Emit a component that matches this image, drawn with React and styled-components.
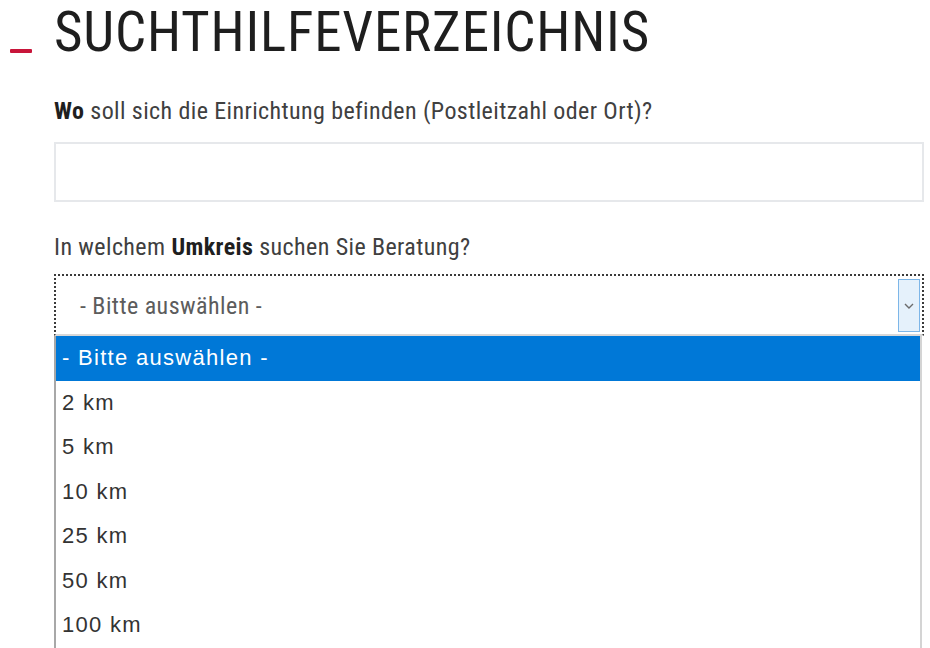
import { useState } from 'react';
import styled, { createGlobalStyle } from 'styled-components';

const GlobalStyle = createGlobalStyle`
    html, body {
        margin: 0;
        padding: 0;
        background: #ffffff;
    }
    body {
        width: 930px;
        height: 648px;
        overflow: hidden;
        font-family: 'Roboto Condensed', 'Liberation Sans Narrow', 'DejaVu Sans Condensed', Roboto, sans-serif;
    }
`;

const Page = styled.main`
    display: flex;
    flex-direction: column;
    padding: 0 6px 0 54px;
`;

const TitleRow = styled.div`
    display: flex;
    align-items: flex-end;
    height: 64px;
    margin-left: -44px;
    gap: 22px;
`;

const Dash = styled.span`
    display: block;
    width: 22px;
    height: 4px;
    margin-bottom: 11px;
    border-radius: 1px;
    background-color: #c8153a;
`;

const Title = styled.h1`
    margin: 0;
    font-family: 'Roboto Condensed', 'Liberation Sans Narrow', 'DejaVu Sans Condensed', Roboto, sans-serif;
    font-size: 55px;
    font-weight: 400;
    letter-spacing: 0.8px;
    line-height: 64px;
    color: #1e1e1e;
    white-space: nowrap;
`;

const Label = styled.label`
    display: block;
    margin: ${({ $top }) => $top}px 0 0;
    font-size: 24px;
    letter-spacing: 0.4px;
    line-height: 30px;
    color: #404040;

    b {
        color: #1f1f1f;
        font-weight: 700;
    }
`;

const TextInput = styled.input`
    display: block;
    box-sizing: border-box;
    width: 870px;
    height: 60px;
    margin-top: 16px;
    border: 2px solid #e6e8eb;
    outline: none;
    background: #ffffff;
`;

const SelectWrap = styled.div`
    position: relative;
    margin-top: 12px;
    width: 870px;
`;

const SelectBox = styled.div`
    display: flex;
    align-items: center;
    box-sizing: border-box;
    height: 62px;
    padding: 3px 2px 2px 24px;
    border: 2px dotted #3a3a3a;
    border-bottom: 2px solid #d8d8d8;
    background: #ffffff;
`;

const SelectValue = styled.span`
    flex: 1;
    font-size: 24px;
    letter-spacing: 0.45px;
    color: #5c5c5c;
`;

const ArrowButton = styled.span`
    display: flex;
    align-items: center;
    justify-content: center;
    box-sizing: border-box;
    width: 22px;
    height: 100%;
    border: 1px solid #7db6e8;
    background: #e5f1fb;
`;

const OptionList = styled.ul`
    position: absolute;
    top: 100%;
    left: 0;
    width: 868px;
    margin: 0;
    padding: 0;
    list-style: none;
    border-left: 2px solid #a8a8a8;
    border-right: 2px solid #d4d4d4;
    border-bottom: 1px solid #dcdcdc;
    background: #ffffff;
    box-sizing: border-box;
`;

const Option = styled.li`
    display: flex;
    align-items: center;
    height: 44.5px;
    padding-left: 6px;
    font-family: 'Liberation Sans', Arial, sans-serif;
    font-size: 22px;
    letter-spacing: 1.3px;
    color: ${({ $active }) => ($active ? '#ffffff' : '#333333')};
    background: ${({ $active }) => ($active ? '#0078d7' : 'transparent')};
`;

const options = ['- Bitte auswählen -', '2 km', '5 km', '10 km', '25 km', '50 km', '100 km'];

export default function App() {
    const [selected] = useState(0);

    return (
        <>
            <GlobalStyle />
            <Page>
                <TitleRow>
                    <Dash />
                    <Title>SUCHTHILFEVERZEICHNIS</Title>
                </TitleRow>

                <Label $top={32} htmlFor="ort">
                    <b>Wo</b> soll sich die Einrichtung befinden (Postleitzahl oder Ort)?
                </Label>
                <TextInput id="ort" type="text" />

                <Label $top={30}>
                    In welchem <b>Umkreis</b> suchen Sie Beratung?
                </Label>
                <SelectWrap>
                    <SelectBox>
                        <SelectValue>- Bitte auswählen -</SelectValue>
                        <ArrowButton>
                            <svg width="10" height="6" viewBox="0 0 10 6">
                                <path d="M1 1l4 4 4-4" fill="none" stroke="#6b6b6b" strokeWidth="1.4" />
                            </svg>
                        </ArrowButton>
                    </SelectBox>
                    <OptionList>
                        {options.map((o, i) => (
                            <Option key={o} $active={i === selected}>
                                {o}
                            </Option>
                        ))}
                    </OptionList>
                </SelectWrap>
            </Page>
        </>
    );
}
